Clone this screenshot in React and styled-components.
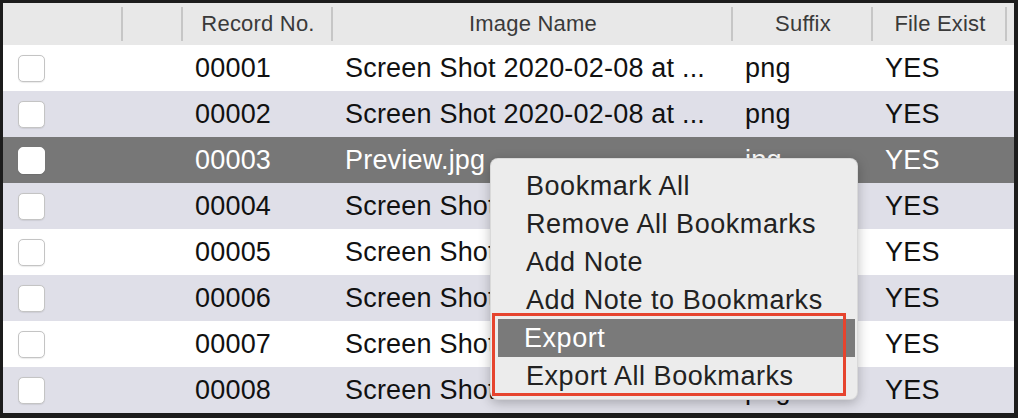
import React from "react";
import styled, { createGlobalStyle } from "styled-components";

const GlobalStyle = createGlobalStyle`
  html, body {
    margin: 0;
    padding: 0;
    background: #ffffff;
  }
  body {
    font-family: "Liberation Sans", Arial, sans-serif;
  }
`;

const COLUMNS = "120px 60px 150px 400px 140px 134px 1fr";

const Page = styled.div`
  position: relative;
  width: 1018px;
  height: 418px;
  overflow: hidden;
`;

const Frame = styled.div`
  box-sizing: border-box;
  width: 1018px;
  height: 418px;
  border-style: solid;
  border-color: #1c1c1c;
  border-width: 3px 4px 5px 3px;
  background: #ffffff;
  display: flex;
  flex-direction: column;
`;

const HeaderRow = styled.div`
  display: grid;
  grid-template-columns: ${COLUMNS};
  height: 42px;
  flex-shrink: 0;
  background: #e8e8e8;
`;

const HeaderCell = styled.div`
  display: flex;
  align-items: center;
  justify-content: center;
  font-size: 22px;
  letter-spacing: 0.2px;
  color: #3a3a3a;
  background: ${p =>
    p.$sep
      ? "linear-gradient(#c6c6c6, #c6c6c6) right center / 2px 34px no-repeat"
      : "none"};
`;

const Row = styled.div`
  display: grid;
  grid-template-columns: ${COLUMNS};
  height: 46px;
  flex-shrink: 0;
  align-items: center;
  background: ${p => (p.$selected ? "#777777" : p.$odd ? "#dfdfe8" : "#ffffff")};
  color: ${p => (p.$selected ? "#ffffff" : "#111111")};
`;

const Cell = styled.div`
  padding-left: 12px;
  font-size: 27px;
  letter-spacing: 0.2px;
  white-space: nowrap;
  overflow: hidden;
`;

const CheckCell = styled.div`
  display: flex;
  align-items: center;
  padding-left: 15px;
`;

const CheckBox = styled.div`
  box-sizing: border-box;
  width: 27px;
  height: 27px;
  border-radius: 5px;
  background: #ffffff;
  border: 1px solid ${p => (p.$selected ? "#ffffff" : "#c4c4c4")};
  box-shadow: 0 0.5px 1px rgba(0, 0, 0, 0.08);
`;

const Menu = styled.div`
  position: absolute;
  left: 490px;
  top: 158px;
  width: 368px;
  box-sizing: border-box;
  padding: 8px 2px 4px 7px;
  background: #ececec;
  border-radius: 8px;
  border: 1px solid rgba(0, 0, 0, 0.08);
  box-shadow: 0 3px 12px rgba(0, 0, 0, 0.25);
  display: flex;
  flex-direction: column;
`;

const MenuItem = styled.div`
  height: 38px;
  flex-shrink: 0;
  display: flex;
  align-items: center;
  padding-left: ${p => (p.$active ? "26px" : "28px")};
  font-size: 27px;
  letter-spacing: 0.55px;
  color: ${p => (p.$active ? "#ffffff" : "#222222")};
  background: ${p => (p.$active ? "#7a7a7a" : "transparent")};
  white-space: nowrap;
`;

const Highlight = styled.div`
  position: absolute;
  left: 492px;
  top: 313px;
  width: 354px;
  height: 83px;
  box-sizing: border-box;
  border: 3px solid #e6442e;
  pointer-events: none;
`;

const headers = [
  { label: "", sep: true },
  { label: "", sep: true },
  { label: "Record No.", sep: true },
  { label: "Image Name", sep: true },
  { label: "Suffix", sep: true },
  { label: "File Exist", sep: true },
  { label: "", sep: false },
];

const longName = "Screen Shot 2020-02-08 at ...";

const records = [
  { no: "00001", name: longName, suffix: "png", exist: "YES" },
  { no: "00002", name: longName, suffix: "png", exist: "YES" },
  { no: "00003", name: "Preview.jpg", suffix: "jpg", exist: "YES", selected: true },
  { no: "00004", name: longName, suffix: "png", exist: "YES" },
  { no: "00005", name: longName, suffix: "png", exist: "YES" },
  { no: "00006", name: longName, suffix: "png", exist: "YES" },
  { no: "00007", name: longName, suffix: "png", exist: "YES" },
  { no: "00008", name: longName, suffix: "png", exist: "YES" },
];

const menuItems = [
  "Bookmark All",
  "Remove All Bookmarks",
  "Add Note",
  "Add Note to Bookmarks",
  "Export",
  "Export All Bookmarks",
];

const App = () => (
  <Page>
    <GlobalStyle />
    <Frame>
      <HeaderRow>
        {headers.map((h, i) => (
          <HeaderCell key={i} $sep={h.sep}>
            {h.label}
          </HeaderCell>
        ))}
      </HeaderRow>
      {records.map((r, i) => (
        <Row key={r.no} $odd={i % 2 === 1} $selected={r.selected}>
          <CheckCell>
            <CheckBox $selected={r.selected} />
          </CheckCell>
          <Cell />
          <Cell>{r.no}</Cell>
          <Cell>{r.name}</Cell>
          <Cell>{r.suffix}</Cell>
          <Cell>{r.exist}</Cell>
          <Cell />
        </Row>
      ))}
    </Frame>
    <Menu>
      {menuItems.map(item => (
        <MenuItem key={item} $active={item === "Export"}>
          {item}
        </MenuItem>
      ))}
    </Menu>
    <Highlight />
  </Page>
);

export default App;
